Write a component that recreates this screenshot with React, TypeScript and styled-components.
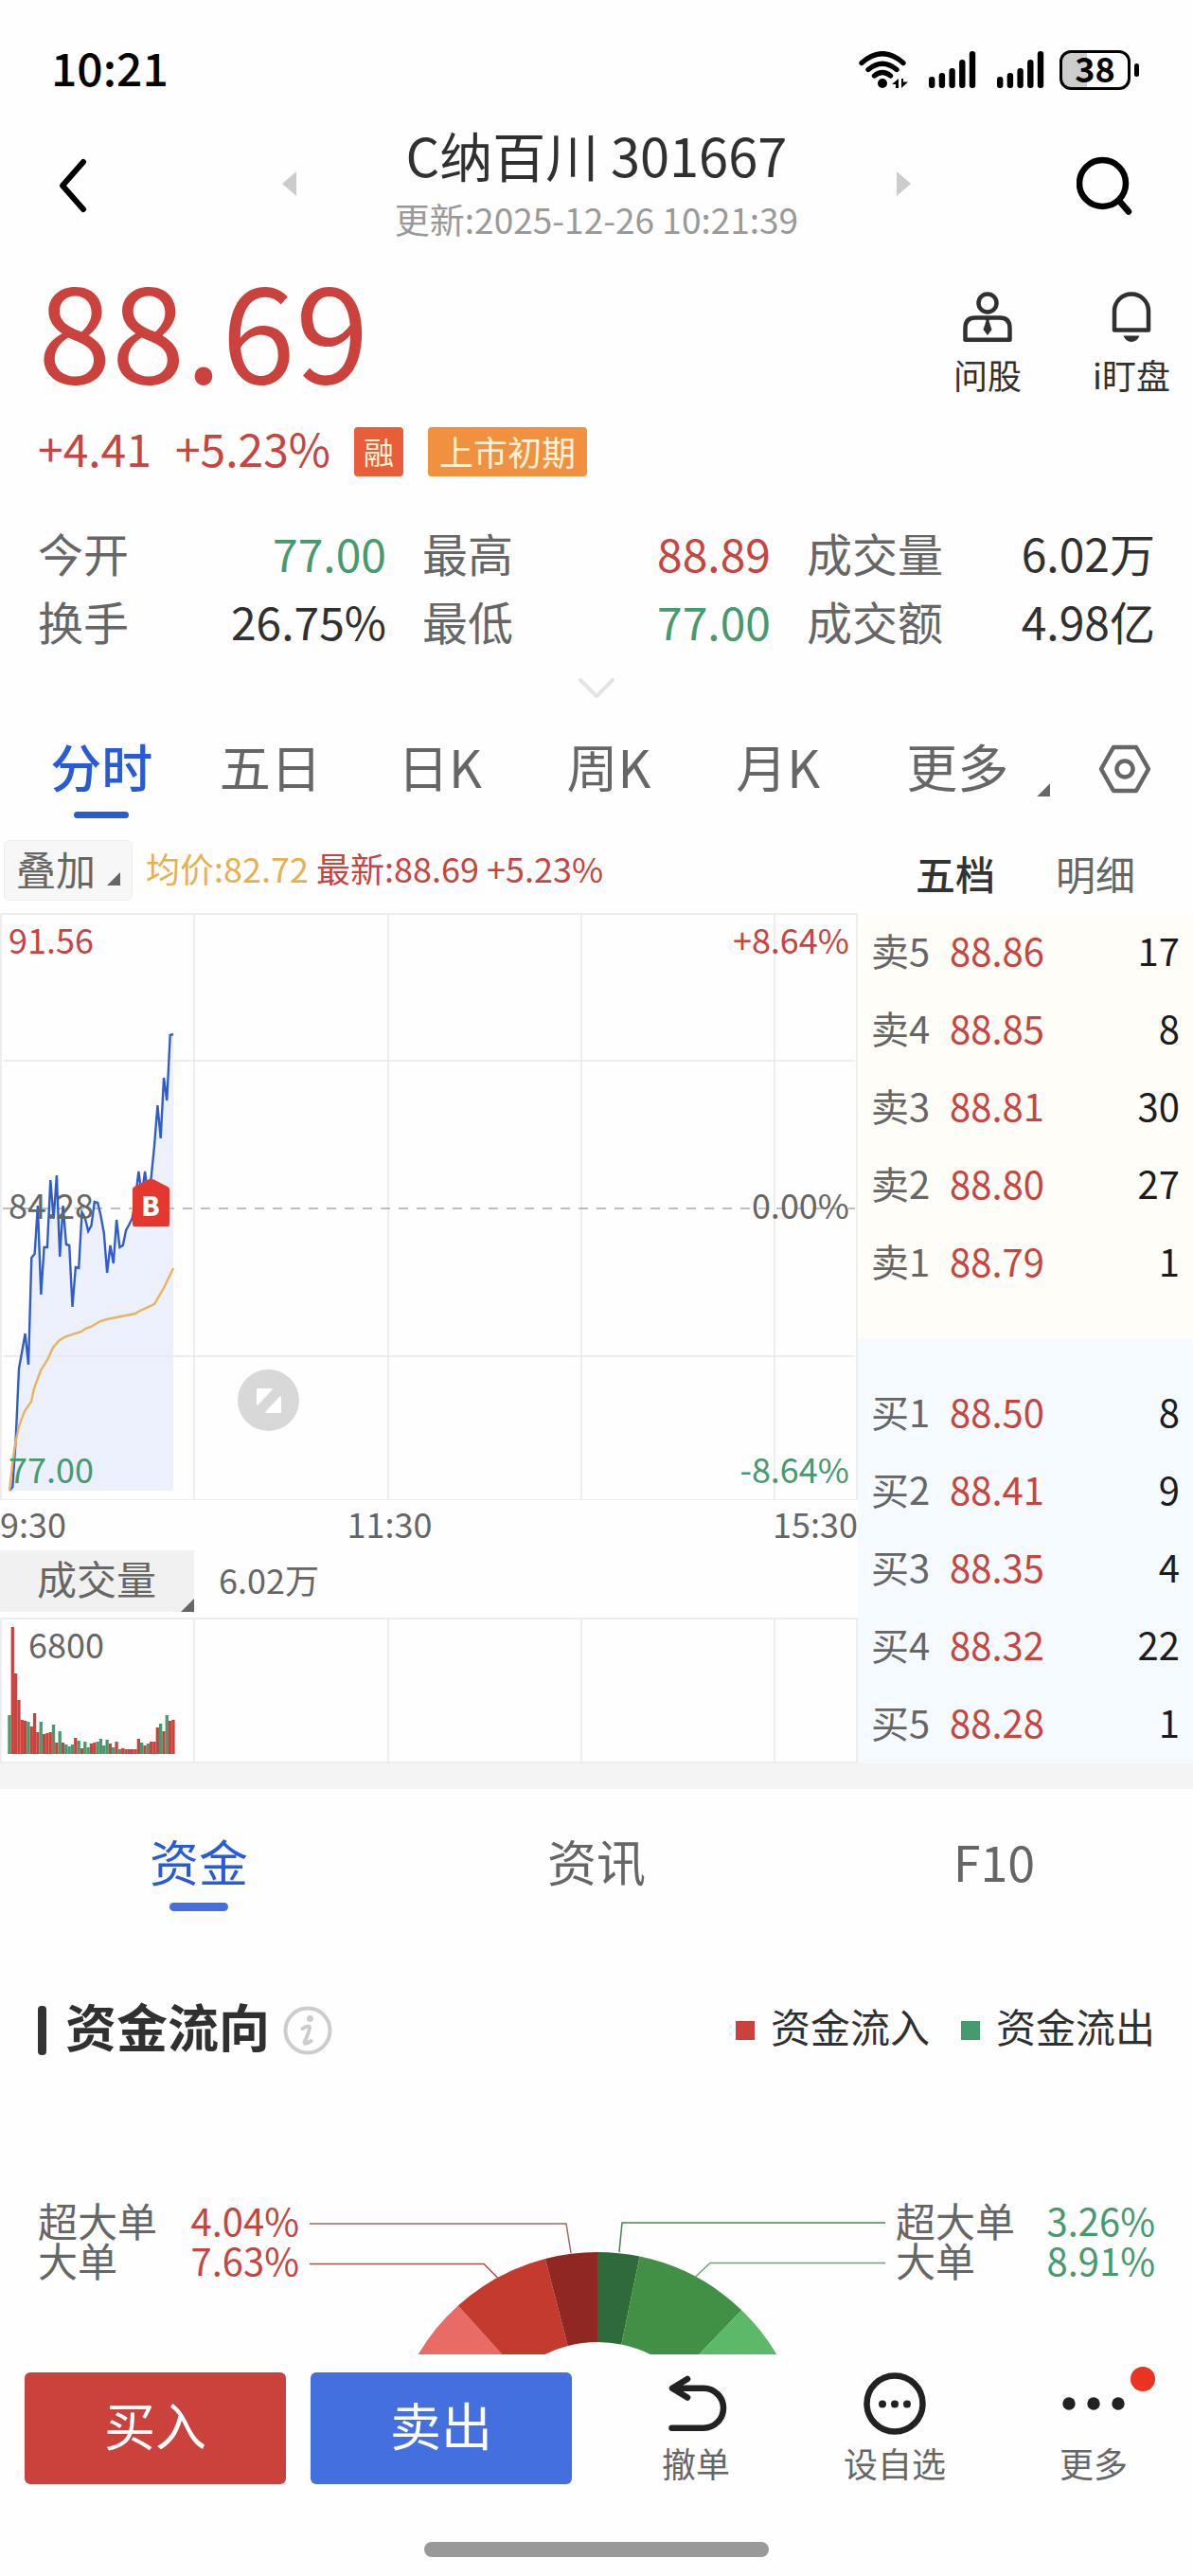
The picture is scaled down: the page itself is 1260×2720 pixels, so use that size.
import React from "react";
import styled, { createGlobalStyle } from "styled-components";

const color = {
  red: "#c74540",
  green: "#469a6e",
  ink: "#303030",
  gray: "#666666",
  light: "#999999",
  blue: "#2a5bd7",
  line: "#e8e8ea",
};

const GlobalStyle = createGlobalStyle`
  * { box-sizing: border-box; }
  body {
    margin: 0;
    background: #fefefe;
    color: ${color.ink};
    font-family: "Noto Sans CJK SC", "Noto Sans", sans-serif;
    font-size: 36px;
  }
  button {
    margin: 0;
    padding: 0;
    border: 0;
    background: none;
    color: inherit;
    font: inherit;
    cursor: pointer;
  }
  h1, h2, p, dl, dd, dt, ul { margin: 0; padding: 0; font-weight: 400; }
  svg { display: block; flex-shrink: 0; }
`;

const Page = styled.div`
  display: flex;
  flex-direction: column;
  min-width: 1000px;
`;

/* ---------- status bar ---------- */

const StatusBar = styled.div`
  display: flex;
  align-items: center;
  justify-content: space-between;
  height: 120px;
  padding: 28px 57px 0 54px;
  color: #000;
`;

const Clock = styled.span`
  padding-bottom: 8px;
  font-size: 48px;
  font-weight: 500;
  line-height: 48px;
`;

const StatusIcons = styled.div`
  display: flex;
  align-items: center;
  gap: 22px;
`;

const Power = styled.div`
  display: flex;
  align-items: center;
  gap: 4px;
  margin-left: -6px;
`;

const Battery = styled.div`
  display: flex;
  justify-content: center;
  width: 75px;
  height: 42px;
  border: 3px solid #000;
  border-radius: 12px;
  background: linear-gradient(90deg, #ccc 38%, #fff 38%);
  font-size: 36px;
  font-weight: 700;
  line-height: 31px;
`;

const BatteryTip = styled.i`
  width: 5px;
  height: 14px;
  border-radius: 3px;
  background: #000;
`;

/* ---------- header ---------- */

const Header = styled.header`
  display: flex;
  align-items: center;
  justify-content: space-between;
  height: 148px;
  padding: 0 48px;
`;

const IconButton = styled.button`
  display: flex;
  align-items: center;
  justify-content: center;
  width: 80px;
  height: 80px;
`;

const Switcher = styled.div`
  display: flex;
  flex: 0 1 664px;
  align-items: center;
  justify-content: space-between;
`;

const Heading = styled.div`
  display: flex;
  flex-direction: column;
  gap: 16px;
  padding-bottom: 6px;
  text-align: center;
`;

const Title = styled.h1`
  font-size: 56px;
  line-height: 64px;
`;

const Updated = styled.p`
  color: ${color.light};
  font-size: 37px;
  line-height: 40px;
`;

/* ---------- quote ---------- */

const Quote = styled.section`
  display: flex;
  justify-content: space-between;
  padding: 8px 24px 0 40px;
`;

const Price = styled.div`
  color: #cb413c;
  font-size: 140px;
  line-height: 136px;
`;

const ChangeRow = styled.div`
  display: flex;
  align-items: center;
  margin-top: 39px;
`;

const Change = styled.span`
  margin-right: 25px;
  padding-bottom: 10px;
  color: ${color.red};
  font-size: 48px;
  line-height: 42px;
`;

const Badge = styled.span<{ $bg: string; $size: number }>`
  height: 52px;
  margin-right: 26px;
  padding: 0 ${(p) => (p.$size > 32 ? 12 : 10)}px;
  border-radius: 4px;
  background: ${(p) => p.$bg};
  color: #fff3d6;
  font-size: ${(p) => p.$size}px;
  line-height: 50px;
`;

const QuoteActions = styled.div`
  display: flex;
  align-items: flex-start;
  gap: 75px;
  padding-top: 32px;
`;

const ActionButton = styled.button`
  display: flex;
  flex-direction: column;
  align-items: center;
  gap: 12px;
  font-size: 36px;
  line-height: 44px;
`;

const Stats = styled.dl`
  display: grid;
  grid-template-columns: repeat(3, 1fr);
  column-gap: 38px;
  margin: 44px 40px 0;
`;

const Stat = styled.div`
  display: flex;
  justify-content: space-between;
  font-size: 48px;
  line-height: 72px;
`;

const StatLabel = styled.dt`
  color: ${color.gray};
`;

const StatValue = styled.dd<{ $color: string }>`
  color: ${(p) => p.$color};
`;

const ExpandButton = styled.button`
  display: flex;
  align-items: center;
  justify-content: center;
  height: 72px;
`;

/* ---------- period tabs ---------- */

const Periods = styled.nav`
  display: flex;
  padding: 14px 0 10px 18px;
`;

const Period = styled.button<{ $active?: boolean; $grow?: number }>`
  display: flex;
  flex: ${(p) => p.$grow ?? 178} 1 0;
  flex-direction: column;
  align-items: center;
  gap: 16px;
  height: 87px;
  color: ${(p) => (p.$active ? color.blue : color.gray)};
  font-size: 54px;
  font-weight: ${(p) => (p.$active ? 500 : 400)};
  line-height: 64px;
  &::after {
    content: "";
    width: 58px;
    height: 7px;
    border-radius: 4px;
    background: ${(p) => (p.$active ? color.blue : "transparent")};
  }
`;

const MoreLabel = styled.span`
  display: flex;
  align-items: flex-end;
  gap: 30px;
  padding-left: 40px;
`;

const SettingsButton = styled.button`
  display: flex;
  flex: 144 1 0;
  align-items: center;
  justify-content: center;
  height: 70px;
`;

const Corner = styled.i`
  width: 14px;
  height: 14px;
  background: ${color.gray};
  clip-path: polygon(100% 0, 100% 100%, 0 100%);
`;

/* ---------- chart and order book ---------- */

const Market = styled.section`
  display: grid;
  grid-template-columns: 906fr 354fr;
  border-bottom: 27px solid #f4f4f4;
`;

const ChartColumn = styled.div`
  display: flex;
  flex-direction: column;
  min-width: 0;
`;

const ChartTools = styled.div`
  display: flex;
  align-items: center;
  height: 90px;
  padding-left: 4px;
  white-space: nowrap;
`;

const OverlayButton = styled.button`
  display: flex;
  align-items: center;
  gap: 12px;
  height: 64px;
  margin-right: 14px;
  padding: 0 12px 4px;
  border: 1px solid #eee;
  border-radius: 6px;
  background: #f7f7f7;
  color: ${color.gray};
  font-size: 42px;
  line-height: 56px;
  ${Corner} { margin-top: 22px; }
`;

const Readout = styled.span<{ $color: string }>`
  margin-right: 8px;
  padding-bottom: 6px;
  color: ${(p) => p.$color};
  font-size: 36px;
  line-height: 40px;
`;

const Plot = styled.div`
  position: relative;
  svg { width: 100%; height: auto; }
`;

const FullscreenButton = styled.button`
  position: absolute;
  bottom: 73px;
  left: 251px;
  width: 65px;
  height: 65px;
  border-radius: 50%;
  background: #d8d8d8;
`;

const TimeAxis = styled.div`
  display: grid;
  grid-template-columns: 1fr auto 1fr;
  height: 53px;
  color: ${color.gray};
  font-size: 36px;
  line-height: 48px;
  span:last-child { text-align: right; }
`;

const MidTime = styled.span`
  margin: 0 83px 0 0;
`;

const VolumeTools = styled.div`
  display: flex;
  align-items: center;
  margin-bottom: 6px;
  color: ${color.gray};
  font-size: 36px;
`;

const VolumeTotal = styled.span`
  padding-bottom: 6px;
  line-height: 40px;
`;

const VolumeButton = styled.button`
  display: flex;
  align-items: flex-end;
  justify-content: flex-end;
  width: 205px;
  height: 65px;
  margin-right: 26px;
  gap: 26px;
  background: #f1f1f1;
  font-size: 42px;
  line-height: 57px;
`;

const VolumeText = styled.span`
  align-self: flex-start;
`;

const Book = styled.aside`
  display: flex;
  flex-direction: column;
`;

const BookTabs = styled.div`
  display: flex;
  align-items: center;
  gap: 64px;
  height: 91px;
  padding: 4px 0 0 61px;
`;

const BookTab = styled.button<{ $active?: boolean }>`
  color: ${(p) => (p.$active ? "#333" : color.gray)};
  font-size: 42px;
  font-weight: ${(p) => (p.$active ? 500 : 400)};
  line-height: 50px;
`;

const Side = styled.div<{ $bg: string; $buy?: boolean }>`
  padding: ${(p) => (p.$buy ? "38px 14px 0" : "0 14px 39px")};
  background: ${(p) => p.$bg};
`;

const Levels = styled.table`
  width: 100%;
  border-collapse: collapse;
  font-size: 40px;
  line-height: 48px;
  tr { height: 82px; }
  th, td { padding: 0 0 6px; font-weight: 400; text-align: left; }
`;

const LevelName = styled.th`
  width: 83px;
  color: ${color.gray};
`;

const LevelPrice = styled.td`
  color: ${color.red};
`;

const LevelSize = styled.td`
  && { text-align: right; }
  color: #1c1c1c;
`;

/* ---------- funds ---------- */

const InfoTabs = styled.nav`
  display: grid;
  grid-template-columns: repeat(3, 1fr);
  padding-top: 46px;
`;

const InfoTab = styled.button<{ $active?: boolean }>`
  display: flex;
  flex-direction: column;
  align-items: center;
  gap: 14px;
  color: ${(p) => (p.$active ? color.blue : color.gray)};
  font-size: 52px;
  font-weight: 400;
  line-height: 60px;
  &::after {
    content: "";
    width: 62px;
    height: 9px;
    border-radius: 5px;
    background: ${(p) => (p.$active ? "#446fdf" : "transparent")};
  }
`;

const FundHeader = styled.div`
  display: flex;
  align-items: center;
  height: 52px;
  margin: 100px 40px 153px;
`;

const TitleBar = styled.i`
  width: 9px;
  height: 52px;
  margin-right: 20px;
  border-radius: 4px;
  background: #333;
`;

const FundTitle = styled.h2`
  margin-right: 14px;
  padding-bottom: 10px;
  font-size: 54px;
  font-weight: 700;
  line-height: 60px;
`;

const InfoButton = styled.button`
  margin-right: auto;
`;

const Legend = styled.span<{ $color: string }>`
  display: flex;
  align-items: center;
  gap: 17px;
  margin-left: 33px;
  font-size: 42px;
  line-height: 42px;
  &::before {
    content: "";
    width: 20px;
    height: 20px;
    background: ${(p) => p.$color};
  }
`;

const LegendText = styled.span`
  padding-bottom: 10px;
`;

const FundChart = styled.div`
  display: grid;
  grid-template-columns: 276fr 608fr 274fr;
  column-gap: 11px;
  align-items: start;
  padding: 0 40px;
`;

const FundPie = styled.svg`
  width: 100%;
  height: auto;
`;

const FundRow = styled.div`
  display: flex;
  justify-content: space-between;
  color: ${color.gray};
  font-size: 42px;
  line-height: 42px;
`;

const FundValue = styled.span<{ $color: string }>`
  color: ${(p) => p.$color};
  font-size: 40px;
`;

/* ---------- bottom bar ---------- */

const BottomBar = styled.footer`
  display: grid;
  grid-template-columns: 1fr 1fr;
  padding-top: 19px;
`;

const TradeButtons = styled.div`
  display: grid;
  grid-template-columns: 1fr 1fr;
  gap: 26px;
  padding: 0 26px;
`;

const TradeButton = styled.button<{ $bg: string }>`
  height: 118px;
  padding-bottom: 8px;
  border-radius: 6px;
  background: ${(p) => p.$bg};
  color: #fff;
  font-size: 54px;
  line-height: 110px;
`;

const Tools = styled.div`
  display: grid;
  grid-template-columns: repeat(3, 1fr);
`;

const Tool = styled.button`
  position: relative;
  display: flex;
  flex-direction: column;
  align-items: center;
  gap: 9px;
  color: ${color.gray};
  font-size: 36px;
  line-height: 40px;
`;

const Dot = styled.i`
  position: absolute;
  top: -6px;
  right: 40px;
  width: 26px;
  height: 26px;
  border-radius: 50%;
  background: #ea3323;
`;

const HomeIndicator = styled.div`
  align-self: center;
  width: 364px;
  height: 16px;
  margin: 61px 0 20px;
  border-radius: 8px;
  background: #999;
`;

/* ---------- data ---------- */

const stats = [
  { label: "今开", value: "77.00", color: color.green },
  { label: "最高", value: "88.89", color: color.red },
  { label: "成交量", value: "6.02万", color: color.ink },
  { label: "换手", value: "26.75%", color: color.ink },
  { label: "最低", value: "77.00", color: color.green },
  { label: "成交额", value: "4.98亿", color: color.ink },
];

const periods = ["分时", "五日", "日K", "周K", "月K"];

const sells: [string, string, number][] = [
  ["卖5", "88.86", 17],
  ["卖4", "88.85", 8],
  ["卖3", "88.81", 30],
  ["卖2", "88.80", 27],
  ["卖1", "88.79", 1],
];

const buys: [string, string, number][] = [
  ["买1", "88.50", 8],
  ["买2", "88.41", 9],
  ["买3", "88.35", 4],
  ["买4", "88.32", 22],
  ["买5", "88.28", 1],
];

// One entry per minute since the open, as a depth below the top of the plot.
const priceLine = [
  610, 606, 555, 481, 463, 444, 477, 364, 360, 309, 403, 353, 353, 282, 323, 277, 363, 309, 350,
  351, 416, 374, 375, 316, 322, 336, 330, 305, 306, 320, 338, 380, 351, 370, 324, 353, 351, 335,
  329, 322, 300, 273, 298, 273, 298, 279, 246, 203, 238, 174, 198, 129, 128,
];

const averageLine =
  "10,610 13,583 16,561 20,542 26,526 33,516 36,502 43,483 50,472 56,459 63,451 70,447 86,442 90,439 96,437 106,431 113,429 123,427 143,423 146,421 163,413 173,396 183,375";

// Volume bars: positive closed up, negative closed down.
const volumes = [
  -41, 134, 85, 57, 36, 35, -34, 29, 43, 23, -34, 21, 22, 23, -31, 12, -24, 12, -10, -8, -10, 17,
  -14, 6, -13, -7, 11, 12, -13, -16, -9, -15, 11, -7, 13, -5, 6, 5, 5, 5, 5, 16, -12, 9, -11, 13,
  13, 28, -32, 24, -41, 35, 36,
];

const minute = 173 / 52;
const gridX = [205, 410, 614, 818];

/* ---------- drawings ---------- */

const Signal = () => (
  <svg width="50" height="40" viewBox="0 0 50 40" aria-hidden="true">
    {[12, 16, 21, 30, 39].map((h, i) => (
      <rect key={i} x={i * 10.7} y={39 - h} width="6.4" height={h} rx="3" />
    ))}
  </svg>
);

const Wifi = () => (
  <svg width="52" height="40" viewBox="0 0 52 40" aria-hidden="true">
    <g fill="none" stroke="#000" strokeWidth="5.4" strokeLinecap="round">
      <path d="M3 12.500Q25-7 47 12.500" />
      <path d="M10 19.500q15-12.500 30 0" />
      <path d="M16.500 26q8.500-7 17 0" />
    </g>
    <circle cx="25" cy="34" r="5" />
    <path d="M42 29v10h-3v-4h-4zM45 39V29h2v3.500h5z" />
  </svg>
);

const PriceChart = () => {
  const points = priceLine.map((y, i) => `${(10 + i * minute).toFixed(1)},${y}`).join(" ");
  return (
    <svg viewBox="0 0 906 620" role="img" aria-label="分时走势">
      <polygon points={`10,610 ${points} 183,610`} fill="#ecf0fc" />
      <g stroke={color.line} strokeWidth="1.500" fill="none">
        <path d="M1 620V1h904v619z" />
        {gridX.map((x) => (
          <path key={x} d={`M${x} 1v619`} />
        ))}
        <path d="M3 156h900M3 468h900" />
      </g>
      <path d="M3 312h900" stroke="#aaa" strokeWidth="1.500" strokeDasharray="10 9" />
      <polyline points={points} fill="none" stroke="#305dcb" strokeWidth="2.400" />
      <polyline points={averageLine} fill="none" stroke="#e8b35c" strokeWidth="2.400" />
      <g fontSize="36">
        <text x="9" y="43" fill={color.red}>91.56</text>
        <text x="9" y="323" fill={color.gray}>84.28</text>
        <text x="9" y="602" fill={color.green}>77.00</text>
      </g>
      <g fontSize="36" textAnchor="end">
        <text x="897" y="43" fill={color.red}>+8.64%</text>
        <text x="897" y="323" fill={color.gray}>0.00%</text>
        <text x="897" y="602" fill={color.green}>-8.64%</text>
      </g>
      <path d="M142 289l15.500-8q2-1 4 0l15.500 8q2 1 2 3v37q0 2-2 2h-35q-2 0-2-2v-37q0-2 2-3z" fill="#e4372d" />
      <text x="159" y="320" fontSize="28" fontWeight="900" fill="#fff" textAnchor="middle">B</text>
    </svg>
  );
};

const VolumeChart = () => (
  <svg viewBox="0 0 906 154" role="img" aria-label="成交量">
    <g stroke={color.line} strokeWidth="1.500" fill="none">
      <path d="M1 1h904v152H1z" />
      {gridX.map((x) => (
        <path key={x} d={`M${x} 1v152`} />
      ))}
    </g>
    {volumes.map((v, i) => (
      <rect
        key={i}
        x={8.3 + i * minute}
        y={144 - Math.abs(v)}
        width="3.300"
        height={Math.abs(v)}
        fill={v > 0 ? "#cb413c" : color.green}
      />
    ))}
    <text x="30" y="43" fontSize="36" fill={color.gray}>6800</text>
  </svg>
);

const slices = [
  { from: -60, to: -42, fill: "#e96b66" },
  { from: -42, to: -14.5, fill: "#c43a2f" },
  { from: -14.5, to: 0, fill: "#902723" },
  { from: 0, to: 11.7, fill: "#2f6a3a" },
  { from: 11.7, to: 43.8, fill: "#419046" },
  { from: 43.8, to: 60, fill: "#5cb96a" },
];

const at = (deg: number, r: number) => {
  const a = (deg * Math.PI) / 180;
  return `${(304 + r * Math.sin(a)).toFixed(1)} ${(275 - r * Math.cos(a)).toFixed(1)}`;
};

const Pie = () => (
  <FundPie viewBox="0 0 608 163" role="img" aria-label="资金流向">
    {slices.map((s) => (
      <path
        key={s.from}
        fill={s.fill}
        d={`M${at(s.from, 220)}A220 220 0 0 1 ${at(s.to, 220)}L${at(s.to, 125)}A125 125 0 0 0 ${at(s.from, 125)}z`}
      />
    ))}
    <g fill="none" strokeWidth="1.500">
      <path d="M0 25h271l5 31" stroke="#a5665f" />
      <path d="M0 67.500h184l15 15" stroke="#a8504b" />
      <path d="M608 24H330l-3 31" stroke="#4f7f57" />
      <path d="M608 66.500H423l-16 15" stroke="#6aa572" />
    </g>
  </FundPie>
);

const BookSide = ({ rows, label }: { rows: [string, string, number][]; label: string }) => (
  <Levels aria-label={label}>
    <tbody>
      {rows.map(([name, price, size]) => (
        <tr key={name}>
          <LevelName scope="row">{name}</LevelName>
          <LevelPrice>{price}</LevelPrice>
          <LevelSize>{size}</LevelSize>
        </tr>
      ))}
    </tbody>
  </Levels>
);

export default function App() {
  return (
    <>
      <GlobalStyle />
      <Page>
        <StatusBar>
          <Clock>10:21</Clock>
          <StatusIcons>
            <Wifi />
            <Signal />
            <Signal />
            <Power>
              <Battery>38</Battery>
              <BatteryTip />
            </Power>
          </StatusIcons>
        </StatusBar>

        <Header>
          <IconButton aria-label="返回">
            <svg width="52" height="64" viewBox="0 0 52 64" fill="none" stroke="#000" strokeWidth="6" strokeLinecap="round" strokeLinejoin="round">
              <path d="M26 9L4 34l22 25" />
            </svg>
          </IconButton>
          <Switcher>
            <button aria-label="上一只">
              <svg width="15" height="26" viewBox="0 0 15 26"><path d="M15 0v26L0 13z" fill="#ccc" /></svg>
            </button>
            <Heading>
              <Title>C纳百川 301667</Title>
              <Updated>更新:2025-12-26 10:21:39</Updated>
            </Heading>
            <button aria-label="下一只">
              <svg width="15" height="26" viewBox="0 0 15 26"><path d="M0 0v26l15-13z" fill="#ccc" /></svg>
            </button>
          </Switcher>
          <IconButton aria-label="搜索">
            <svg width="70" height="70" viewBox="0 0 70 70" fill="none" stroke="#000" strokeWidth="6.500" strokeLinecap="round">
              <circle cx="27.500" cy="34.500" r="24.500" />
              <path d="M45 53l10 11.500" />
            </svg>
          </IconButton>
        </Header>

        <Quote>
          <div>
            <Price>88.69</Price>
            <ChangeRow>
              <Change>+4.41</Change>
              <Change>+5.23%</Change>
              <Badge $bg="#e95d38" $size={32}>融</Badge>
              <Badge $bg="#f19140" $size={36}>上市初期</Badge>
            </ChangeRow>
          </div>
          <QuoteActions>
            <ActionButton>
              <svg width="52" height="53" viewBox="0 0 52 53" fill="none" stroke="#303030" strokeWidth="4.500" strokeLinejoin="round">
                <circle cx="26" cy="12" r="9.500" />
                <path d="M13 27.500h26q10.500 0 10.500 11v12.200h-47V38.500q0-11 10.500-11z" />
                <path d="M23 27h6l-1.500 4 3 9-4.500 6-4.500-6 3-9z" fill="#303030" stroke="none" />
              </svg>
              问股
            </ActionButton>
            <ActionButton>
              <svg width="42" height="53" viewBox="0 0 42 53" fill="none" stroke="#303030" strokeWidth="4.500" strokeLinejoin="round">
                <path d="M3 40.500V20.500a18 18 0 0 1 36 0v20z" />
                <path d="M12.500 46.500h17q-2.500 6.500-8.500 6.500t-8.500-6.500z" fill="#303030" stroke="none" />
              </svg>
              i盯盘
            </ActionButton>
          </QuoteActions>
        </Quote>

        <Stats>
          {stats.map((s) => (
            <Stat key={s.label}>
              <StatLabel>{s.label}</StatLabel>
              <StatValue $color={s.color}>{s.value}</StatValue>
            </Stat>
          ))}
        </Stats>

        <ExpandButton aria-label="展开">
          <svg width="40" height="24" viewBox="0 0 40 24" fill="none" stroke="#e4e4e4" strokeWidth="4" strokeLinecap="round" strokeLinejoin="round">
            <path d="M3 3l17 17L37 3" />
          </svg>
        </ExpandButton>

        <Periods>
          {periods.map((p, i) => (
            <Period key={p} $active={i === 0}>{p}</Period>
          ))}
          <Period $grow={204}>
            <MoreLabel>
              更多
              <Corner />
            </MoreLabel>
          </Period>
          <SettingsButton aria-label="设置">
            <svg width="56" height="52" viewBox="0 0 56 52" fill="none" stroke={color.gray} strokeWidth="4.500" strokeLinejoin="round">
              <path d="M16 3h24l13 23-13 23H16L3 26z" />
              <circle cx="28" cy="26" r="8.500" />
            </svg>
          </SettingsButton>
        </Periods>

        <Market>
          <ChartColumn>
            <ChartTools>
              <OverlayButton>
                叠加
                <Corner />
              </OverlayButton>
              <Readout $color="#e6b04d">均价:82.72</Readout>
              <Readout $color={color.red}>最新:88.69 +5.23%</Readout>
            </ChartTools>
            <Plot>
              <PriceChart />
              <FullscreenButton aria-label="全屏">
                <svg viewBox="0 0 65 65" fill="#fff">
                  <path d="M21 20h14q3 0 1 2L22 37q-2 2-2-1V21q0-1 1-1zM45 46H31q-3 0-1-2l14-15q2-2 2 1v15q0 1-1 1z" />
                </svg>
              </FullscreenButton>
            </Plot>
            <TimeAxis>
              <span>9:30</span>
              <MidTime>11:30</MidTime>
              <span>15:30</span>
            </TimeAxis>
            <VolumeTools>
              <VolumeButton>
                <VolumeText>成交量</VolumeText>
                <Corner />
              </VolumeButton>
              <VolumeTotal>6.02万</VolumeTotal>
            </VolumeTools>
            <Plot>
              <VolumeChart />
            </Plot>
          </ChartColumn>

          <Book>
            <BookTabs>
              <BookTab $active>五档</BookTab>
              <BookTab>明细</BookTab>
            </BookTabs>
            <Side $bg="#fffdf7">
              <BookSide rows={sells} label="卖盘" />
            </Side>
            <Side $bg="#f5faff" $buy>
              <BookSide rows={buys} label="买盘" />
            </Side>
          </Book>
        </Market>

        <InfoTabs>
          <InfoTab $active>资金</InfoTab>
          <InfoTab>资讯</InfoTab>
          <InfoTab>F10</InfoTab>
        </InfoTabs>

        <FundHeader>
          <TitleBar />
          <FundTitle>资金流向</FundTitle>
          <InfoButton aria-label="说明">
            <svg width="52" height="52" viewBox="0 0 52 52" fill="none" stroke="#ccc" strokeWidth="4">
              <circle cx="26" cy="26" r="23.500" />
              <circle cx="28.500" cy="13.500" r="3.500" fill="#ccc" stroke="none" />
              <path d="M20.500 24q7-4 7.500-1.500t-5.500 16q0 3 7-1.500" strokeLinecap="round" />
            </svg>
          </InfoButton>
          <Legend $color="#cb413c"><LegendText>资金流入</LegendText></Legend>
          <Legend $color={color.green}><LegendText>资金流出</LegendText></Legend>
        </FundHeader>

        <FundChart>
          <div>
            <FundRow>超大单<FundValue $color={color.red}>4.04%</FundValue></FundRow>
            <FundRow>大单<FundValue $color={color.red}>7.63%</FundValue></FundRow>
          </div>
          <Pie />
          <div>
            <FundRow>超大单<FundValue $color={color.green}>3.26%</FundValue></FundRow>
            <FundRow>大单<FundValue $color={color.green}>8.91%</FundValue></FundRow>
          </div>
        </FundChart>

        <BottomBar>
          <TradeButtons>
            <TradeButton $bg="#cb413c">买入</TradeButton>
            <TradeButton $bg="#446fdf">卖出</TradeButton>
          </TradeButtons>
          <Tools>
            <Tool>
              <svg width="66" height="66" viewBox="0 0 66 66" fill="none" stroke="#222" strokeWidth="6.500" strokeLinecap="round" strokeLinejoin="round">
                <path d="M24 7L8 16.700 24 26.500" />
                <path d="M10 16.700h31a21 21 0 0 1 0 42H7.500" />
              </svg>
              撤单
            </Tool>
            <Tool>
              <svg width="66" height="66" viewBox="0 0 66 66" fill="#222">
                <circle cx="33" cy="33" r="29.500" fill="none" stroke="#222" strokeWidth="6.500" />
                <circle cx="20" cy="33.500" r="4" />
                <circle cx="33" cy="33.500" r="4" />
                <circle cx="46" cy="33.500" r="4" />
              </svg>
              设自选
            </Tool>
            <Tool>
              <svg width="66" height="66" viewBox="0 0 66 66" fill="#222">
                <circle cx="7" cy="33" r="6.700" />
                <circle cx="33" cy="33" r="6.700" />
                <circle cx="59" cy="33" r="6.700" />
              </svg>
              更多
              <Dot />
            </Tool>
          </Tools>
        </BottomBar>
        <HomeIndicator />
      </Page>
    </>
  );
}
